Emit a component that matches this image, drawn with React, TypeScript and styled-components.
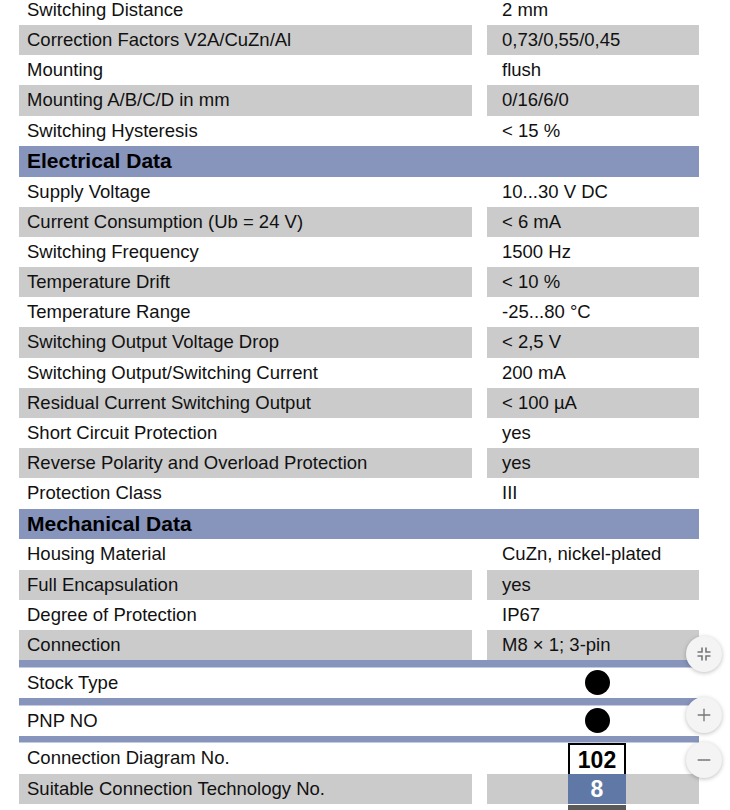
import styled, { createGlobalStyle } from "styled-components";
import { Minus, Plus } from "lucide-react";

type Row = { label: string; value: string };

const general: Row[] = [
  { label: "Switching Distance", value: "2 mm" },
  { label: "Correction Factors V2A/CuZn/Al", value: "0,73/0,55/0,45" },
  { label: "Mounting", value: "flush" },
  { label: "Mounting A/B/C/D in mm", value: "0/16/6/0" },
  { label: "Switching Hysteresis", value: "< 15 %" },
];

const electrical: Row[] = [
  { label: "Supply Voltage", value: "10...30 V DC" },
  { label: "Current Consumption (Ub = 24 V)", value: "< 6 mA" },
  { label: "Switching Frequency", value: "1500 Hz" },
  { label: "Temperature Drift", value: "< 10 %" },
  { label: "Temperature Range", value: "-25...80 °C" },
  { label: "Switching Output Voltage Drop", value: "< 2,5 V" },
  { label: "Switching Output/Switching Current", value: "200 mA" },
  { label: "Residual Current Switching Output", value: "< 100 µA" },
  { label: "Short Circuit Protection", value: "yes" },
  { label: "Reverse Polarity and Overload Protection", value: "yes" },
  { label: "Protection Class", value: "III" },
];

const mechanical: Row[] = [
  { label: "Housing Material", value: "CuZn, nickel-plated" },
  { label: "Full Encapsulation", value: "yes" },
  { label: "Degree of Protection", value: "IP67" },
  { label: "Connection", value: "M8 × 1; 3-pin" },
];

const GlobalStyle = createGlobalStyle`
  body {
    margin: 0;
    background: #ffffff;
    font-family: "Liberation Sans", Arial, sans-serif;
    color: #111;
    overflow: hidden;
  }
`;

const Page = styled.div`
  position: relative;
  width: 730px;
  height: 810px;
  overflow: hidden;
`;

const Sheet = styled.div`
  margin-top: -5.2px;
  padding-left: 19px;
  width: 680px;
  display: flex;
  flex-direction: column;
`;

const TableRow = styled.div`
  display: grid;
  grid-template-columns: 453px 15px 212px;
  height: 30.2px;
  font-size: 18.5px;
  line-height: 30.2px;
`;

const Cell = styled.div<{ $shade: boolean; $value?: boolean }>`
  background: ${(p) => (p.$shade ? "#cbcbcb" : "transparent")};
  padding-left: ${(p) => (p.$value ? 15 : 8)}px;
  white-space: nowrap;
  overflow: hidden;
`;

const Gap = styled.div``;

const Header = styled.div`
  height: 30.8px;
  line-height: 30.8px;
  background: #8794bc;
  padding-left: 8px;
  font-size: 21px;
  font-weight: 700;
  color: #000;
`;

const Stripe = styled.div`
  height: 7.6px;
  background: #8794bc;
  border-bottom: 1px solid #c4cbdf;
  box-sizing: border-box;
`;

const MarkCell = styled.div<{ $shade: boolean }>`
  background: ${(p) => (p.$shade ? "#cbcbcb" : "transparent")};
  padding-left: 81px;
  display: flex;
  align-items: stretch;
`;

const MarkSlot = styled.div`
  width: 58px;
  display: flex;
  align-items: center;
  justify-content: center;
`;

const Dot = styled.div`
  width: 25px;
  height: 25px;
  border-radius: 50%;
  background: #000;
`;

const NumberBox = styled.div<{ $tone: "outline" | "blue" }>`
  width: 58px;
  height: 100%;
  box-sizing: border-box;
  display: flex;
  align-items: center;
  justify-content: center;
  font-weight: 700;
  font-size: 23px;
  background: ${(p) => (p.$tone === "blue" ? "#5f78a5" : "#fff")};
  color: ${(p) => (p.$tone === "blue" ? "#fff" : "#000")};
  border: ${(p) => (p.$tone === "blue" ? "none" : "2px solid #000")};
`;

const TailRow = styled.div`
  display: grid;
  grid-template-columns: 453px 15px 212px;
  margin-top: 1px;
  height: 10px;
`;

const DarkBlock = styled.div`
  margin-left: 81px;
  width: 58px;
  background: #5a5a5a;
`;

const Controls = styled.div`
  position: absolute;
  left: 686px;
  top: 636px;
  display: flex;
  flex-direction: column;
  gap: 9px;
`;

const RoundButton = styled.button<{ $space?: number }>`
  width: 36px;
  height: 36px;
  border-radius: 50%;
  border: none;
  padding: 0;
  margin-top: ${(p) => p.$space ?? 0}px;
  background: #f4f4f4;
  box-shadow: 0 1px 4px rgba(0, 0, 0, 0.25);
  color: #777;
  display: flex;
  align-items: center;
  justify-content: center;
`;

function DataRows({ rows }: { rows: Row[] }) {
  return (
    <>
      {rows.map((r, i) => (
        <TableRow key={r.label}>
          <Cell $shade={i % 2 === 1}>{r.label}</Cell>
          <Gap />
          <Cell $shade={i % 2 === 1} $value>
            {r.value}
          </Cell>
        </TableRow>
      ))}
    </>
  );
}

function CollapseIcon() {
  return (
    <svg width="16" height="16" viewBox="0 0 16 16" fill="none" stroke="#777" strokeWidth="1.6">
      <path d="M6 1.5V6H1.5" />
      <path d="M10 1.5V6h4.5" />
      <path d="M6 14.5V10H1.5" />
      <path d="M10 14.5V10h4.5" />
    </svg>
  );
}

export default function App() {
  return (
    <Page>
      <GlobalStyle />
      <Sheet>
        <DataRows rows={general} />
        <Header>Electrical Data</Header>
        <DataRows rows={electrical} />
        <Header>Mechanical Data</Header>
        <DataRows rows={mechanical} />
        <Stripe />
        <TableRow>
          <Cell $shade={false}>Stock Type</Cell>
          <Gap />
          <MarkCell $shade={false}>
            <MarkSlot>
              <Dot />
            </MarkSlot>
          </MarkCell>
        </TableRow>
        <Stripe />
        <TableRow>
          <Cell $shade={false}>PNP NO</Cell>
          <Gap />
          <MarkCell $shade={false}>
            <MarkSlot>
              <Dot />
            </MarkSlot>
          </MarkCell>
        </TableRow>
        <Stripe />
        <TableRow>
          <Cell $shade={false}>Connection Diagram No.</Cell>
          <Gap />
          <MarkCell $shade={false}>
            <NumberBox $tone="outline">102</NumberBox>
          </MarkCell>
        </TableRow>
        <TableRow>
          <Cell $shade>Suitable Connection Technology No.</Cell>
          <Gap />
          <MarkCell $shade>
            <NumberBox $tone="blue">8</NumberBox>
          </MarkCell>
        </TableRow>
        <TailRow>
          <div />
          <Gap />
          <DarkBlock />
        </TailRow>
      </Sheet>
      <Controls>
        <RoundButton aria-label="collapse">
          <CollapseIcon />
        </RoundButton>
        <RoundButton aria-label="zoom in" $space={16}>
          <Plus size={20} strokeWidth={1.6} />
        </RoundButton>
        <RoundButton aria-label="zoom out">
          <Minus size={20} strokeWidth={1.6} />
        </RoundButton>
      </Controls>
    </Page>
  );
}
